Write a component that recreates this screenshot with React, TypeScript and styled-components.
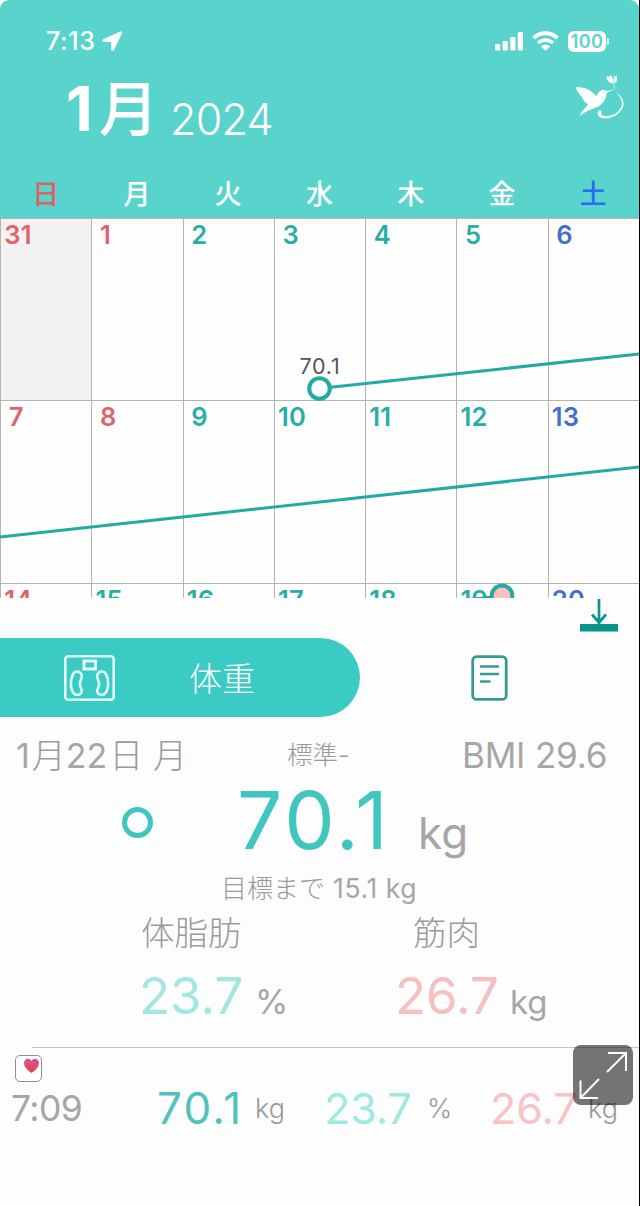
import React from "react";
import styled, { createGlobalStyle } from "styled-components";

const GlobalStyle = createGlobalStyle`
  *, *::before, *::after { box-sizing: border-box; }
  body { margin: 0; background: #fff; }
`;

const teal = "#58d4cd";
const gray = "#a6a6a6";

const Phone = styled.main`
  width: 640px;
  height: 1206px;
  overflow: hidden;
  border-right: 1px solid #000;
  background: #fdfdfd;
  font-family: Inter, "Noto Sans CJK JP", sans-serif;
  white-space: nowrap;
`;

const Header = styled.header`
  height: 218px;
  background: ${teal};
  color: #fff;
  border-radius: 9px 9px 0 0;
`;

const StatusBar = styled.div`
  display: flex;
  align-items: center;
  height: 62px;
  padding: 20px 30px 0 46px;
`;

const Clock = styled.span`
  width: 56px;
  font-size: 25px;
  line-height: 42px;
  font-weight: 500;
  letter-spacing: 0.6px;
`;

const StatusIcons = styled.div`
  display: flex;
  align-items: center;
  gap: 9px;
  margin-left: auto;
`;

const Battery = styled.div`
  display: flex;
  align-items: center;
  gap: 1px;
`;

const BatteryBody = styled.span`
  width: 38px;
  height: 21px;
  border-radius: 6px;
  background: #fff;
  color: ${teal};
  font-size: 18px;
  line-height: 21px;
  font-weight: 600;
  letter-spacing: 0.4px;
  text-align: center;
`;

const BatteryTip = styled.span`
  width: 2px;
  height: 7px;
  border-radius: 0 3px 3px 0;
  background: #fff;
`;

const TitleRow = styled.div`
  display: flex;
  align-items: flex-start;
  height: 108px;
  padding: 12px 14px 0 66px;
`;

const Month = styled.h1`
  width: 86px;
  margin: 0;
  font-size: 62px;
  line-height: 70px;
  font-weight: 700;
  letter-spacing: 6px;
`;

const MonthKanji = styled.span`
  font-size: 60px;
  font-weight: 500;
`;

const Year = styled.span`
  margin: 20px 0 0 18px;
  font-size: 43px;
  line-height: 50px;
  font-weight: 300;
  letter-spacing: -0.7px;
`;

const Logo = styled.svg`
  width: 50px;
  height: 46px;
  margin-left: auto;
`;

const Weekdays = styled.div`
  display: grid;
  grid-template-columns: repeat(7, 91.25px);
  height: 48px;
  line-height: 50px;
  font-size: 27px;
  font-weight: 500;
  text-align: center;
`;

const Weekday = styled.span<{ $color?: string }>`
  color: ${(p) => p.$color ?? "#fff"};
`;

const Calendar = styled.section`
  position: relative;
  height: 380px;
  overflow: hidden;
`;

const Days = styled.div`
  display: grid;
  grid-template-columns: repeat(7, 91.25px);
  grid-auto-rows: 182.4px;
`;

const Day = styled.div<{ $color: string; $muted?: boolean }>`
  border-left: 1px solid #b4b4b4;
  border-top: 1px solid #b4b4b4;
  background: ${(p) => (p.$muted ? "#f2f2f2" : "#fefefe")};
  color: ${(p) => p.$color};
`;

const DayNumber = styled.span<{ $wide: boolean }>`
  display: block;
  padding-left: ${(p) => (p.$wide ? 3.2 : 7.8)}px;
  font-size: 25.5px;
  line-height: 32.4px;
  font-weight: 600;
  letter-spacing: 0.4px;
`;

const Trend = styled.svg`
  position: absolute;
  inset: 0;
  width: 639px;
  height: 380px;
`;

const TrendLabel = styled.text`
  font-size: 21.5px;
  letter-spacing: 0.8px;
  fill: #555;
`;

const ActionBar = styled.div`
  display: flex;
  justify-content: flex-end;
  height: 40px;
  padding-right: 21px;
`;

const Tabs = styled.nav`
  display: flex;
  height: 79px;
`;

const ActiveTab = styled.div`
  display: flex;
  align-items: center;
  width: 360px;
  padding-left: 64px;
  border-radius: 0 40px 40px 0;
  background: #3acbc4;
  color: #fff;
`;

const TabLabel = styled.span`
  margin: 2px 0 0 74px;
  font-size: 33px;
  line-height: 40px;
  font-weight: 300;
`;

const Tab = styled.div`
  display: flex;
  align-items: center;
  padding-left: 111px;
`;

const Summary = styled.section`
  height: 330px;
  color: ${gray};
`;

const InfoRow = styled.div`
  display: flex;
  align-items: baseline;
  height: 64px;
  line-height: 76px;
  padding-left: 16px;
  font-size: 35px;
`;

const DateLabel = styled.span`
  width: 271px;
  font-size: 34px;
`;

const Kanji = styled.span`
  margin-left: 2px;
  font-weight: 300;
  color: #9a9a9a;
`;

const Rating = styled.span`
  align-self: flex-start;
  width: 175px;
  font-size: 25.5px;
  font-weight: 300;
  color: #9a9a9a;
`;

const Bmi = styled.span`
  letter-spacing: -0.2px;
`;

const WeightRow = styled.div`
  display: flex;
  align-items: baseline;
  height: 86px;
  padding-left: 122px;
`;

const Ring = styled.span`
  align-self: flex-start;
  width: 31px;
  height: 31px;
  margin: 26px 84px 0 0;
  border: 5px solid #40c5bf;
  border-radius: 50%;
`;

const Value = styled.span<{ $size: number; $color: string; $width: number; $spacing?: number }>`
  width: ${(p) => p.$width}px;
  font-size: ${(p) => p.$size}px;
  line-height: 82px;
  letter-spacing: ${(p) => p.$spacing ?? 0}px;
  color: ${(p) => p.$color};
`;

const MainValue = styled(Value)`
  line-height: 78px;
`;

const Unit = styled.span<{ $size: number; $width?: number }>`
  width: ${(p) => (p.$width ? `${p.$width}px` : "auto")};
  font-size: ${(p) => p.$size}px;
  line-height: 40px;
`;

const Goal = styled.div`
  height: 42px;
  padding-left: 221px;
  font-size: 26.5px;
  line-height: 42px;
  letter-spacing: 0.6px;
`;

const GoalPrefix = styled.span`
  font-size: 26px;
  font-weight: 300;
  letter-spacing: 0;
  color: #9a9a9a;
`;

const LabelRow = styled.div`
  display: flex;
  height: 46px;
  padding-left: 141px;
  font-size: 33.5px;
  line-height: 48px;
  font-weight: 300;
  color: #9a9a9a;
`;

const MetricLabel = styled.span`
  width: 272px;
`;

const MetricRow = styled.div`
  display: flex;
  align-items: baseline;
  height: 80px;
  padding-left: 139px;
`;

const Entry = styled.section`
  position: relative;
  color: ${gray};
`;

const Divider = styled.hr`
  height: 1px;
  margin: 0 0 0 32px;
  border: 0;
  background: #c6c6c6;
`;

const HealthBadge = styled.div`
  width: 27px;
  height: 27px;
  margin: 7px 0 0 15px;
  border: 1px solid #8e8e98;
  border-radius: 5px;
  background: #fff;
`;

const EntryRow = styled.div`
  display: flex;
  align-items: flex-start;
  padding-left: 11px;
`;

const EntryTime = styled.span`
  width: 146px;
  font-size: 35.5px;
  line-height: 54px;
  letter-spacing: -0.6px;
`;

const EntryValue = styled(Value)`
  line-height: 53px;
`;

const EntryUnit = styled(Unit)`
  font-weight: 300;
  line-height: 54px;
  color: #9a9a9a;
`;

const ExpandButton = styled.button`
  position: absolute;
  left: 573px;
  top: -2px;
  width: 60px;
  height: 60px;
  padding: 0;
  border: 0;
  border-radius: 8px;
  background: rgba(0, 0, 0, 0.54);
`;

const red = "#e0636b";
const green = "#28aea5";
const blue = "#456fcb";

const weekdays = [
  { name: "日", color: "#df6065" },
  { name: "月" },
  { name: "火" },
  { name: "水" },
  { name: "木" },
  { name: "金" },
  { name: "土", color: "#2c6bf0" },
];

const days = [31, ...Array.from({ length: 20 }, (_, i) => i + 1)];
const holidays = [1, 8];

function dayColor(day: number, index: number) {
  if (index % 7 === 0 || holidays.includes(day)) return red;
  return index % 7 === 6 ? blue : green;
}

export default function App() {
  return (
    <Phone>
      <GlobalStyle />
      <Header>
        <StatusBar>
          <Clock>7:13</Clock>
          <svg width="21" height="20" viewBox="0 0 21 20">
            <path d="M18.800 .8 1 8.700c-.9.5-.6 1.800.3 1.800l8.200.2.2 8.100c0 1 1.400 1.200 1.800.3L19.800 1.900c.3-.8-.2-1.400-1-1.100Z" fill="#fff" stroke="#fff" strokeWidth=".8" strokeLinejoin="round" />
          </svg>
          <StatusIcons>
            <svg width="28" height="20" viewBox="0 0 28 20" fill="#fff">
              <rect x="0" y="13" width="5.2" height="6.5" rx="1.3" />
              <rect x="7.6" y="10" width="5.2" height="9.5" rx="1.3" />
              <rect x="15.3" y="6" width="5.2" height="13.5" rx="1.3" />
              <rect x="22.8" y="1" width="5.2" height="18.5" rx="1.3" />
            </svg>
            <svg width="27" height="20" viewBox="0 0 27 20" fill="none" stroke="#fff" strokeWidth="3.9">
              <path d="M1.600 7.100a17 17 0 0 1 23.800 0" />
              <path d="M6.100 12.100a10.400 10.400 0 0 1 14.800 0" strokeWidth="3.600" />
              <path d="M13.500 19.800 8.900 15.400a6.500 6.500 0 0 1 9.200 0Z" fill="#fff" stroke="none" />
            </svg>
            <Battery>
              <BatteryBody>100</BatteryBody>
              <BatteryTip />
            </Battery>
          </StatusIcons>
        </StatusBar>
        <TitleRow>
          <Month>1<MonthKanji>月</MonthKanji></Month>
          <Year>2024</Year>
          <Logo viewBox="0 0 50 46" fill="#fff">
            <path d="M.7 13.300C7 12.800 14.500 14.800 18.300 19.300Q20.500 21.500 21.700 21.900C23 18.500 25 16 28.300 16Q30 15.800 31.500 17C34 16.300 37 15.500 40 15.500C37 16.300 33.500 17.300 31.600 19.300C31.500 24 28.500 29.500 23.300 32.500C17 35 10 37.500 4.300 42.300C6.500 38.500 9 34.500 12.500 31.500C13.500 30.500 12.500 29.800 10.500 28.500C8.500 27 8.500 25.500 7.500 24C5.500 21 2.500 18.500.7 13.300Z" />
            <circle cx="29" cy="18.300" r=".7" fill={teal} />
            <path d="M40.300 17.500C46 21.500 49.500 26.500 48.300 32C45.500 41 34 46.300 26 43.700C21.800 42 21.800 36.500 24.800 36.300C27 36.500 26.500 38.500 26 40C28 44 43 43 46.700 31.500C47.800 26.500 44.500 21.500 40.300 17.500Z" />
            <path d="M38.300 9.500C34 9 31 6 31.500 2C32.500 2.200 33.500 2.500 34.500 3Q34.500 1.800 35.500 1.200C38.500 4 39 6.500 38.300 9.500ZM39.700 9.500C39 6 38.500 4 39 1Q40 2 40.500 3L41.500 1C42.500 5 42.500 7.500 39.700 9.500Z" />
            <path d="M38.600 8.500Q40 11 39.300 15.400" fill="none" stroke="#fff" strokeWidth=".6" />
          </Logo>
        </TitleRow>
        <Weekdays>
          {weekdays.map((d) => (
            <Weekday key={d.name} $color={d.color}>{d.name}</Weekday>
          ))}
        </Weekdays>
      </Header>

      <Calendar>
        <Days>
          {days.map((day, i) => (
            <Day key={i} $color={dayColor(day, i)} $muted={i === 0}>
              <DayNumber $wide={day > 9}>{day}</DayNumber>
            </Day>
          ))}
        </Days>
        <Trend viewBox="0 0 639 380">
          <g stroke="#23aaa4" strokeWidth="3" fill="none">
            <path d="M319 170.500 639 136" />
            <path d="M0 319 639 249" />
            <path d="M456 383 502 378" />
          </g>
          <circle cx="319.500" cy="170.500" r="10.300" fill="#fff" stroke="#23aaa4" strokeWidth="4" />
          <circle cx="502" cy="377.800" r="10.300" fill="#ffbfc0" stroke="#23aaa4" strokeWidth="4" />
          <TrendLabel x="320" y="155.800" textAnchor="middle">70.1</TrendLabel>
        </Trend>
      </Calendar>

      <ActionBar>
        <svg width="38" height="35" viewBox="0 0 38 35">
          <path d="M0 26h38v7.500H0Z" fill="#0b938d" />
          <path d="M19 1v25M12 16.500l7 8 7-8" fill="none" stroke="#0b938d" strokeWidth="2.700" />
        </svg>
      </ActionBar>

      <Tabs>
        <ActiveTab>
          <svg width="51" height="46" viewBox="0 0 51 46" fill="none" stroke="#e2fffc" strokeWidth="2.600">
            <rect x="1.300" y="1.300" width="48.400" height="43.400" rx="3" />
            <rect x="20" y="6" width="11.500" height="8" strokeWidth="3" />
            <path d="M12.500 16.500c3 0 5.500 1.500 5.300 5-.3 3.500-2.300 5-1.800 8.500.6 3 2 4.300 1.800 6.500-.3 2.800-3.500 4-6.300 3-3.300-1.300-4.800-7-4.600-12 .2-5.500 2.300-10.500 5.600-11Z" />
            <path d="M38.500 16.500c-3 0-5.500 1.500-5.300 5 .3 3.500 2.300 5 1.800 8.500-.6 3-2 4.300-1.800 6.500.3 2.800 3.500 4 6.300 3 3.300-1.300 4.800-7 4.600-12-.2-5.500-2.300-10.500-5.600-11Z" />
          </svg>
          <TabLabel>体重</TabLabel>
        </ActiveTab>
        <Tab>
          <svg width="37" height="46" viewBox="0 0 37 46" fill="none" stroke="#379a94" strokeWidth="2.800">
            <rect x="1.700" y="1.600" width="33.500" height="42.800" rx="4" />
            <path d="M10 11.500h17M10 19h17M10 26.500h8.500" strokeWidth="2.400" strokeLinecap="round" />
          </svg>
        </Tab>
      </Tabs>

      <Summary>
        <InfoRow>
          <DateLabel>
            1<Kanji>月</Kanji>22<Kanji>日 月</Kanji>
          </DateLabel>
          <Rating>標準-</Rating>
          <Bmi>BMI 29.6</Bmi>
        </InfoRow>
        <WeightRow>
          <Ring />
          <MainValue $size={80} $color="#40c5bf" $width={181} $spacing={3.2}>70.1</MainValue>
          <Unit $size={44}>kg</Unit>
        </WeightRow>
        <Goal>
          <GoalPrefix>目標まで</GoalPrefix> 15.1 kg
        </Goal>
        <LabelRow>
          <MetricLabel>体脂肪</MetricLabel>
          <span>筋肉</span>
        </LabelRow>
        <MetricRow>
          <Value $size={51} $color="#a2e8e1" $width={116}>23.7</Value>
          <Unit $size={34} $width={140}>%</Unit>
          <Value $size={51} $color="#f6c0c1" $width={115}>26.7</Value>
          <Unit $size={33}>kg</Unit>
        </MetricRow>
      </Summary>

      <Entry>
        <Divider />
        <HealthBadge>
          <svg width="25" height="25" viewBox="0 0 25 25">
            <defs>
              <linearGradient id="heart" x1="0" y1="0" x2="0" y2="1">
                <stop offset="0" stopColor="#dc5494" />
                <stop offset="1" stopColor="#e83c4b" />
              </linearGradient>
            </defs>
            <path d="M15.500 17C10.500 13.500 8 10.500 8 7.300C8 2.500 13.500 1.300 15.500 5C17.500 1.300 23 2.500 23 7.300C23 10.500 20.500 13.500 15.500 17Z" fill="url(#heart)" />
          </svg>
        </HealthBadge>
        <EntryRow>
          <EntryTime>7:09</EntryTime>
          <EntryValue $size={44} $color="#50c2bc" $width={98} $spacing={2.2}>70.1</EntryValue>
          <EntryUnit $size={27} $width={69}>kg</EntryUnit>
          <EntryValue $size={43} $color="#9aebe1" $width={103}>23.7</EntryValue>
          <EntryUnit $size={27} $width={63}>%</EntryUnit>
          <EntryValue $size={43} $color="#f9c2c5" $width={98}>26.7</EntryValue>
          <EntryUnit $size={27}>kg</EntryUnit>
        </EntryRow>
        <ExpandButton aria-label="expand">
          <svg width="60" height="60" viewBox="0 0 60 60" fill="none" stroke="#fff" strokeWidth="2">
            <path d="M34 27 53 8M35 8h18v18M26 34 7.500 53M7.500 35.500V53H25" />
          </svg>
        </ExpandButton>
      </Entry>
    </Phone>
  );
}
